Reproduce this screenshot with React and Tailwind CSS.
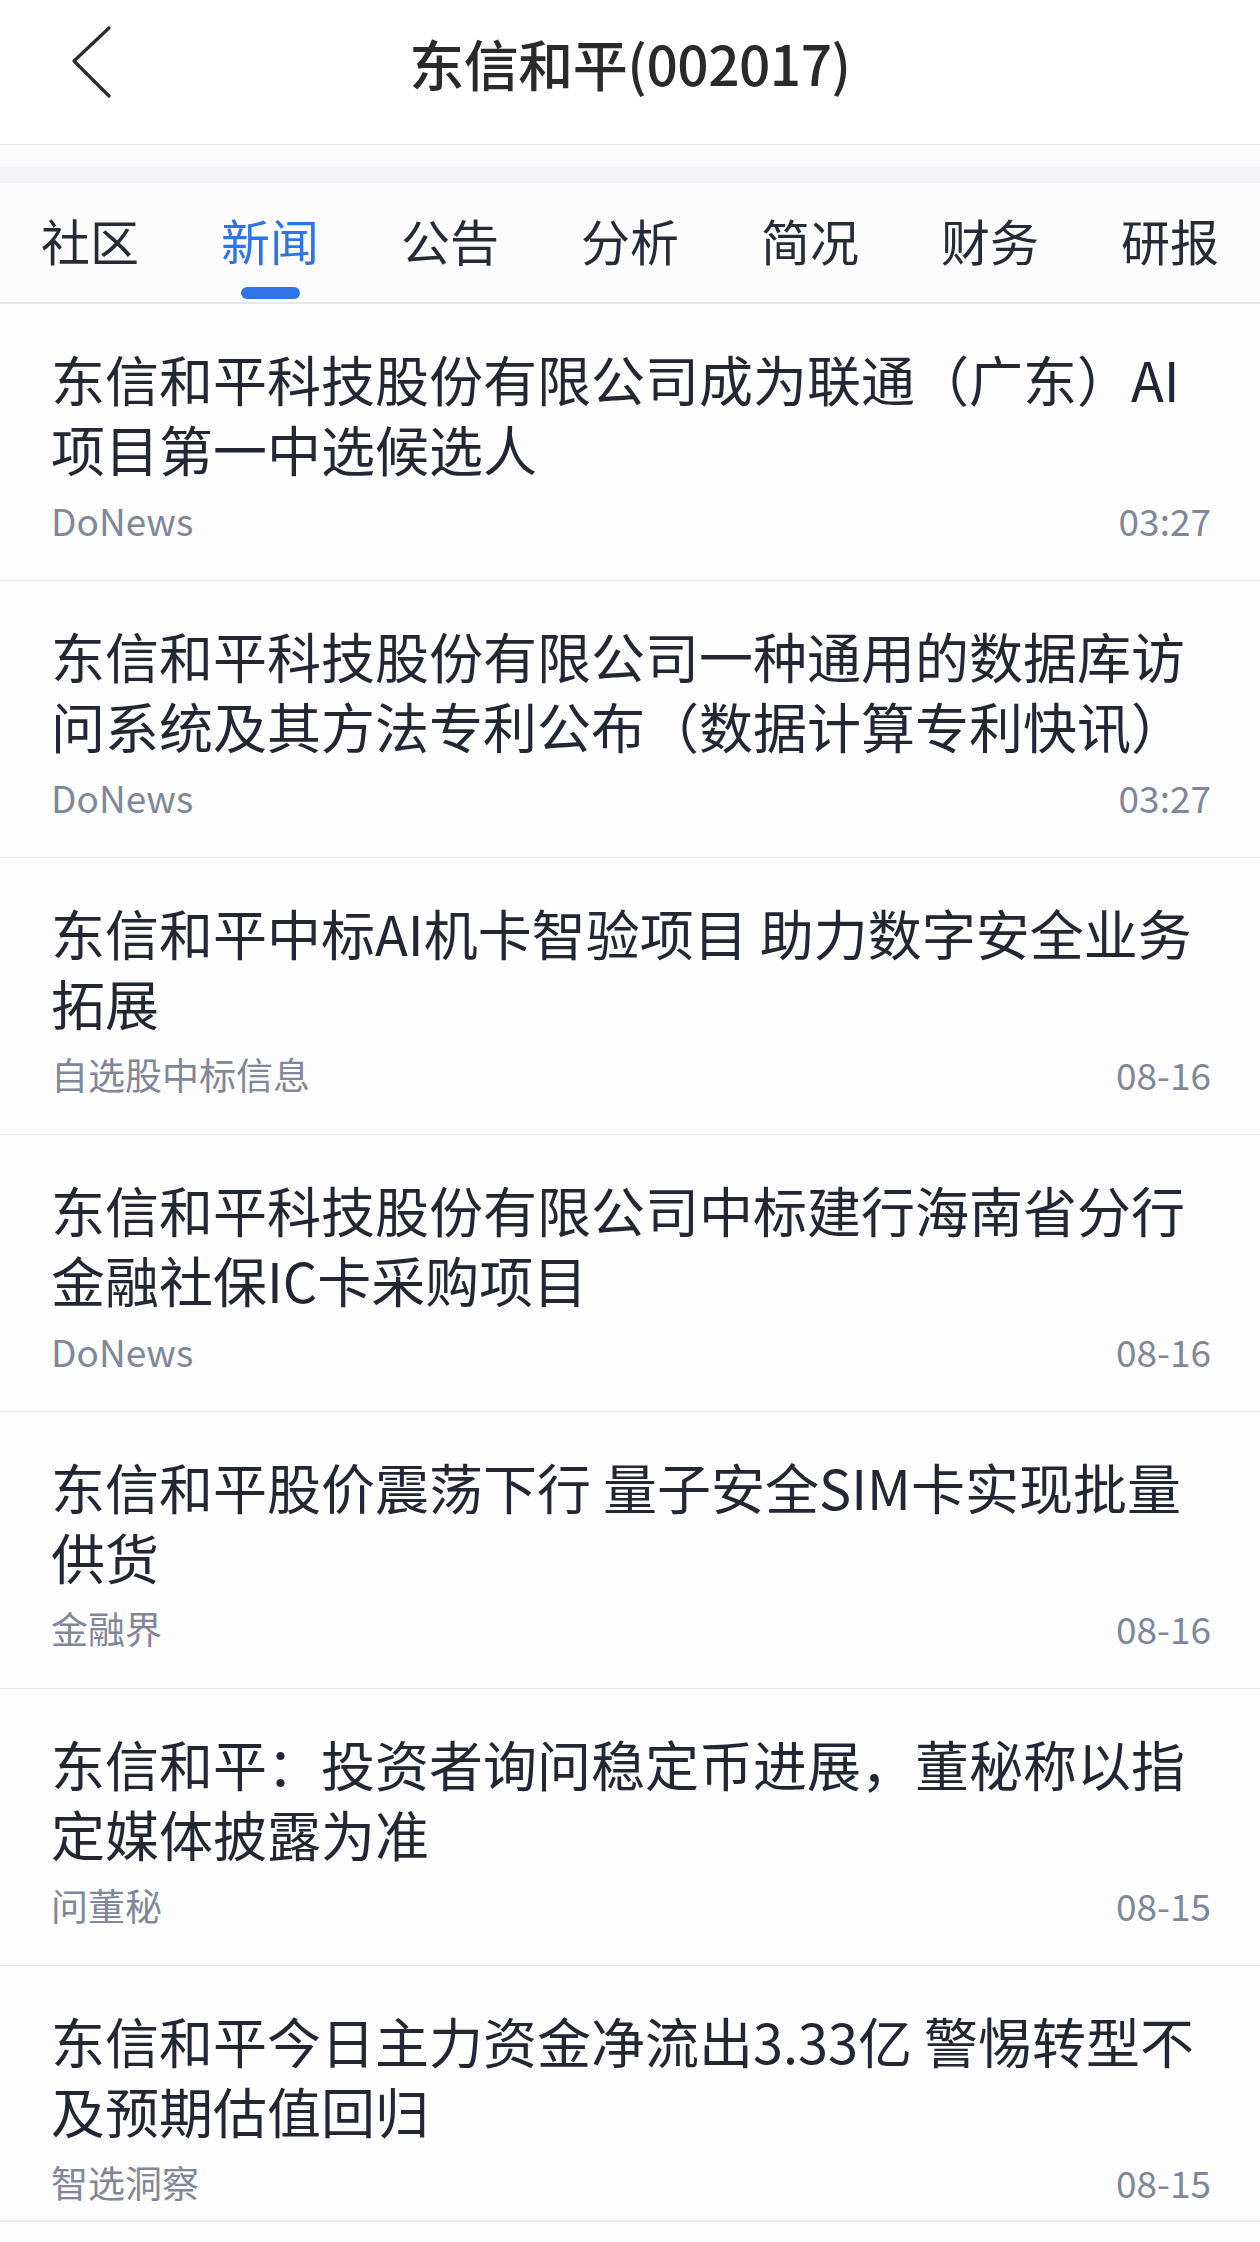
import React from "react";

const tabs = ["社区", "新闻", "公告", "分析", "简况", "财务", "研报"];

const news = [
  {
    lines: ["东信和平科技股份有限公司成为联通（广东）AI", "项目第一中选候选人"],
    source: "DoNews",
    time: "03:27",
  },
  {
    lines: ["东信和平科技股份有限公司一种通用的数据库访", "问系统及其方法专利公布（数据计算专利快讯）"],
    source: "DoNews",
    time: "03:27",
  },
  {
    lines: ["东信和平中标AI机卡智验项目 助力数字安全业务", "拓展"],
    source: "自选股中标信息",
    time: "08-16",
  },
  {
    lines: ["东信和平科技股份有限公司中标建行海南省分行", "金融社保IC卡采购项目"],
    source: "DoNews",
    time: "08-16",
  },
  {
    lines: ["东信和平股价震荡下行 量子安全SIM卡实现批量", "供货"],
    source: "金融界",
    time: "08-16",
  },
  {
    lines: ["东信和平：投资者询问稳定币进展，董秘称以指", "定媒体披露为准"],
    source: "问董秘",
    time: "08-15",
  },
  {
    lines: ["东信和平今日主力资金净流出3.33亿 警惕转型不", "及预期估值回归"],
    source: "智选洞察",
    time: "08-15",
  },
];

function BackIcon() {
  return (
    <svg width="44" height="72" viewBox="0 0 44 72" fill="none">
      <path d="M39 2 L4 35 L39 70" stroke="#2b2b2b" strokeWidth="3.2" strokeLinecap="round" strokeLinejoin="round" />
    </svg>
  );
}

export default function App() {
  return (
    <div className="w-[1260px] min-h-[2242px] bg-[#fdfdfe] font-['Noto_Sans_CJK_SC','Noto_Sans',sans-serif]">
      {/* Header */}
      <div className="h-[145px] pb-[20px] bg-white border-b border-[#e6e6e9] grid grid-cols-[1fr_auto_1fr] items-center">
        <div className="pl-[70px] flex items-center">
          <BackIcon />
        </div>
        <div className="text-[55px] font-medium text-[#2a2a2a] leading-[60px] tracking-[-0.5px]">东信和平(002017)</div>
        <div />
      </div>
      <div className="h-[22px] bg-[#fbfbfc]" />
      <div className="h-[16px] bg-[#f2f4f7]" />

      {/* Tabs */}
      <div className="h-[121px] bg-[#fcfcfd] border-b-2 border-[#e6e7ec] flex">
        {tabs.map((t) => {
          const active = t === "新闻";
          return (
            <div key={t} className="w-[180px] flex flex-col items-center pt-[27px]">
              <div
                className={
                  active
                    ? "text-[49px] leading-[60px] text-[#2f74e6]"
                    : "text-[49px] leading-[60px] text-[#262b38]"
                }
              >
                {t}
              </div>
              {active ? (
                <div className="mt-[17px] w-[59px] h-[12px] rounded-full bg-[#2f74e6]" />
              ) : null}
            </div>
          );
        })}
      </div>

      {/* News list */}
      <div>
        {news.map((n, i) => {
          const last = i === news.length - 1;
          return (
            <div
              key={i}
              className={
                last
                  ? "pl-[51px] pr-[49px] pt-[40px] pb-[12px] border-b-2 border-[#e8e9ee]"
                  : "pl-[51px] pr-[49px] pt-[40px] pb-[34px] border-b border-[#ebebee]"
              }
            >
              <div className="text-[54px] leading-[70px] text-[#232734] whitespace-nowrap">
                {n.lines[0]}
                <br />
                {n.lines[1]}
              </div>
              <div className="mt-[12px] h-[50px] flex items-center justify-between text-[37px] text-[#80879a]">
                <span>{n.source}</span>
                <span>{n.time}</span>
              </div>
            </div>
          );
        })}
      </div>
    </div>
  );
}
